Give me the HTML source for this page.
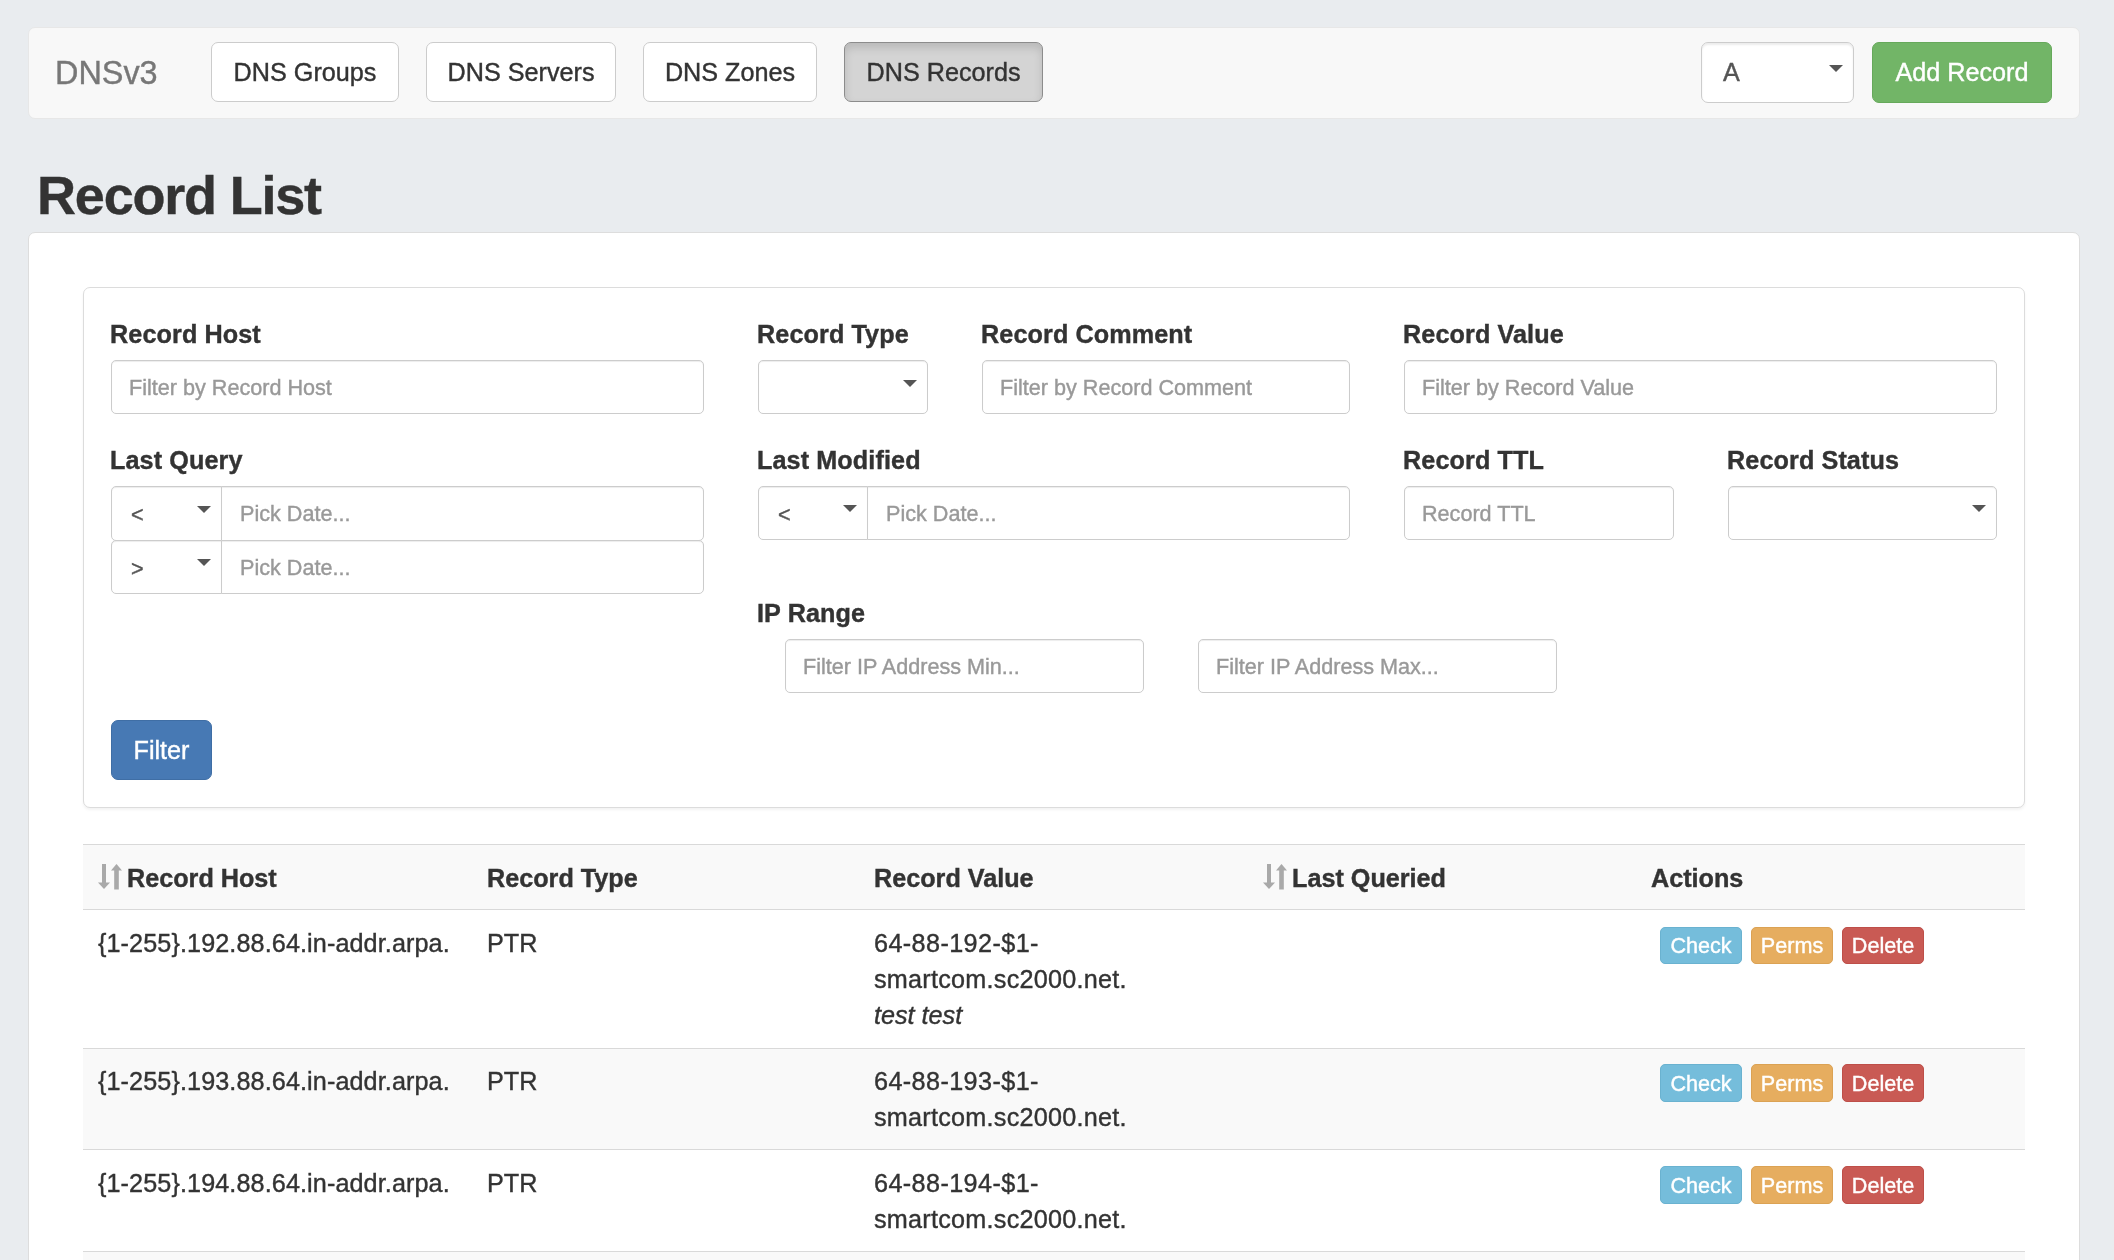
<!DOCTYPE html><html><head><meta charset="utf-8"><style>
html,body{margin:0;padding:0;}
.t{will-change:transform;-webkit-text-stroke:0.4px currentColor;}
body{width:2114px;height:1260px;overflow:hidden;position:relative;background:#e9ecef;font-family:"Liberation Sans", sans-serif;color:#333;}
</style></head><body>
<div style="position:absolute;left:28px;top:27px;width:2052px;height:92px;box-sizing:border-box;background:#f8f8f8;border:1px solid #e7e7e7;border-radius:7px;"></div>
<div class="t" style="position:absolute;left:55.00px;top:57.37px;font-size:32.4px;line-height:32.4px;white-space:nowrap;color:#777;">DNSv3</div>
<div style="position:absolute;left:211px;top:42px;width:188px;height:60px;box-sizing:border-box;background:#fff;border:1px solid #ccc;border-radius:7px;"></div>
<div class="t" style="position:absolute;left:211px;top:59.67px;width:188px;text-align:center;font-size:25.2px;line-height:25.2px;white-space:nowrap;color:#333;">DNS Groups</div>
<div style="position:absolute;left:426px;top:42px;width:190px;height:60px;box-sizing:border-box;background:#fff;border:1px solid #ccc;border-radius:7px;"></div>
<div class="t" style="position:absolute;left:426px;top:59.67px;width:190px;text-align:center;font-size:25.2px;line-height:25.2px;white-space:nowrap;color:#333;">DNS Servers</div>
<div style="position:absolute;left:643px;top:42px;width:174px;height:60px;box-sizing:border-box;background:#fff;border:1px solid #ccc;border-radius:7px;"></div>
<div class="t" style="position:absolute;left:643px;top:59.67px;width:174px;text-align:center;font-size:25.2px;line-height:25.2px;white-space:nowrap;color:#333;">DNS Zones</div>
<div style="position:absolute;left:844px;top:42px;width:199px;height:60px;box-sizing:border-box;background:#d4d4d4;border:1px solid #8c8c8c;border-radius:7px;box-shadow:inset 0 5px 9px rgba(0,0,0,.125);"></div>
<div class="t" style="position:absolute;left:844px;top:59.67px;width:199px;text-align:center;font-size:25.2px;line-height:25.2px;white-space:nowrap;color:#333;">DNS Records</div>
<div style="position:absolute;left:1701px;top:42px;width:153px;height:61px;box-sizing:border-box;background:#fff;border:1px solid #ccc;border-radius:7px;box-shadow:inset 0 2px 2px rgba(0,0,0,.075);"></div>
<div class="t" style="position:absolute;left:1723.00px;top:60.07px;font-size:25.2px;line-height:25.2px;white-space:nowrap;color:#555;">A</div>
<div style="position:absolute;left:1829px;top:64.5px;width:0;height:0;border-left:7.0px solid transparent;border-right:7.0px solid transparent;border-top:7.5px solid #555;"></div>
<div style="position:absolute;left:1872px;top:42px;width:180px;height:61px;box-sizing:border-box;background:#72b567;border:1px solid #66a95b;border-radius:7px;"></div>
<div class="t" style="position:absolute;left:1872px;top:60.07px;width:180px;text-align:center;font-size:25.2px;line-height:25.2px;white-space:nowrap;color:#fff;">Add Record</div>
<div class="t" style="position:absolute;left:37.00px;top:168.09px;font-size:54px;line-height:54px;white-space:nowrap;font-weight:bold;letter-spacing:-1.2px;">Record List</div>
<div style="position:absolute;left:28px;top:232px;width:2052px;height:1068px;box-sizing:border-box;background:#fff;border:1px solid #ddd;border-radius:7px;"></div>
<div style="position:absolute;left:83px;top:287px;width:1942px;height:521px;box-sizing:border-box;background:#fff;border:1px solid #dcdcdc;border-radius:7px;box-shadow:0 2px 3px rgba(0,0,0,.05);"></div>
<div class="t" style="position:absolute;left:110.00px;top:322.37px;font-size:25.2px;line-height:25.2px;white-space:nowrap;font-weight:bold;letter-spacing:0.1px;">Record Host</div>
<div class="t" style="position:absolute;left:757.00px;top:322.37px;font-size:25.2px;line-height:25.2px;white-space:nowrap;font-weight:bold;letter-spacing:0.1px;">Record Type</div>
<div class="t" style="position:absolute;left:981.00px;top:322.37px;font-size:25.2px;line-height:25.2px;white-space:nowrap;font-weight:bold;letter-spacing:0.1px;">Record Comment</div>
<div class="t" style="position:absolute;left:1403.00px;top:322.37px;font-size:25.2px;line-height:25.2px;white-space:nowrap;font-weight:bold;letter-spacing:0.1px;">Record Value</div>
<div class="t" style="position:absolute;left:110.00px;top:448.17px;font-size:25.2px;line-height:25.2px;white-space:nowrap;font-weight:bold;letter-spacing:0.1px;">Last Query</div>
<div class="t" style="position:absolute;left:757.00px;top:448.17px;font-size:25.2px;line-height:25.2px;white-space:nowrap;font-weight:bold;letter-spacing:0.1px;">Last Modified</div>
<div class="t" style="position:absolute;left:1403.00px;top:448.17px;font-size:25.2px;line-height:25.2px;white-space:nowrap;font-weight:bold;letter-spacing:0.1px;">Record TTL</div>
<div class="t" style="position:absolute;left:1727.00px;top:448.17px;font-size:25.2px;line-height:25.2px;white-space:nowrap;font-weight:bold;letter-spacing:0.1px;">Record Status</div>
<div class="t" style="position:absolute;left:757.00px;top:600.57px;font-size:25.2px;line-height:25.2px;white-space:nowrap;font-weight:bold;letter-spacing:0.1px;">IP Range</div>
<div style="position:absolute;left:111px;top:360px;width:593px;height:54px;box-sizing:border-box;background:#fff;border:1px solid #ccc;border-radius:5px;box-shadow:inset 0 1px 1px rgba(0,0,0,.075);"></div>
<div class="t" style="position:absolute;left:129.00px;top:376.72px;font-size:21.6px;line-height:21.6px;white-space:nowrap;color:#999;">Filter by Record Host</div>
<div style="position:absolute;left:758px;top:360px;width:170px;height:54px;box-sizing:border-box;background:#fff;border:1px solid #ccc;border-radius:5px;box-shadow:inset 0 1px 1px rgba(0,0,0,.075);"></div>
<div style="position:absolute;left:903px;top:379.6px;width:0;height:0;border-left:7.0px solid transparent;border-right:7.0px solid transparent;border-top:7.5px solid #555;"></div>
<div style="position:absolute;left:982px;top:360px;width:368px;height:54px;box-sizing:border-box;background:#fff;border:1px solid #ccc;border-radius:5px;box-shadow:inset 0 1px 1px rgba(0,0,0,.075);"></div>
<div class="t" style="position:absolute;left:1000.00px;top:376.72px;font-size:21.6px;line-height:21.6px;white-space:nowrap;color:#999;">Filter by Record Comment</div>
<div style="position:absolute;left:1404px;top:360px;width:593px;height:54px;box-sizing:border-box;background:#fff;border:1px solid #ccc;border-radius:5px;box-shadow:inset 0 1px 1px rgba(0,0,0,.075);"></div>
<div class="t" style="position:absolute;left:1422.00px;top:376.72px;font-size:21.6px;line-height:21.6px;white-space:nowrap;color:#999;">Filter by Record Value</div>
<div style="position:absolute;left:111px;top:486px;width:111px;height:55px;box-sizing:border-box;background:#fff;border:1px solid #ccc;border-radius:5px 0 0 5px;box-shadow:inset 0 1px 1px rgba(0,0,0,.075);"></div>
<div style="position:absolute;left:221px;top:486px;width:483px;height:55px;box-sizing:border-box;background:#fff;border:1px solid #ccc;border-radius:0 5px 5px 0;box-shadow:inset 0 1px 1px rgba(0,0,0,.075);"></div>
<div class="t" style="position:absolute;left:130.50px;top:504.22px;font-size:21.6px;line-height:21.6px;white-space:nowrap;color:#555;">&lt;</div>
<div style="position:absolute;left:197px;top:505.5px;width:0;height:0;border-left:7.0px solid transparent;border-right:7.0px solid transparent;border-top:7.5px solid #555;"></div>
<div class="t" style="position:absolute;left:240.00px;top:503.22px;font-size:21.6px;line-height:21.6px;white-space:nowrap;color:#999;">Pick Date...</div>
<div style="position:absolute;left:111px;top:540px;width:111px;height:54px;box-sizing:border-box;background:#fff;border:1px solid #ccc;border-radius:5px 0 0 5px;box-shadow:inset 0 1px 1px rgba(0,0,0,.075);"></div>
<div style="position:absolute;left:221px;top:540px;width:483px;height:54px;box-sizing:border-box;background:#fff;border:1px solid #ccc;border-radius:0 5px 5px 0;box-shadow:inset 0 1px 1px rgba(0,0,0,.075);"></div>
<div class="t" style="position:absolute;left:130.50px;top:557.72px;font-size:21.6px;line-height:21.6px;white-space:nowrap;color:#555;">&gt;</div>
<div style="position:absolute;left:197px;top:559.0px;width:0;height:0;border-left:7.0px solid transparent;border-right:7.0px solid transparent;border-top:7.5px solid #555;"></div>
<div class="t" style="position:absolute;left:240.00px;top:556.72px;font-size:21.6px;line-height:21.6px;white-space:nowrap;color:#999;">Pick Date...</div>
<div style="position:absolute;left:758px;top:486px;width:110px;height:54px;box-sizing:border-box;background:#fff;border:1px solid #ccc;border-radius:5px 0 0 5px;box-shadow:inset 0 1px 1px rgba(0,0,0,.075);"></div>
<div style="position:absolute;left:867px;top:486px;width:483px;height:54px;box-sizing:border-box;background:#fff;border:1px solid #ccc;border-radius:0 5px 5px 0;box-shadow:inset 0 1px 1px rgba(0,0,0,.075);"></div>
<div class="t" style="position:absolute;left:777.50px;top:503.72px;font-size:21.6px;line-height:21.6px;white-space:nowrap;color:#555;">&lt;</div>
<div style="position:absolute;left:843px;top:505.0px;width:0;height:0;border-left:7.0px solid transparent;border-right:7.0px solid transparent;border-top:7.5px solid #555;"></div>
<div class="t" style="position:absolute;left:886.00px;top:502.72px;font-size:21.6px;line-height:21.6px;white-space:nowrap;color:#999;">Pick Date...</div>
<div style="position:absolute;left:1404px;top:486px;width:270px;height:54px;box-sizing:border-box;background:#fff;border:1px solid #ccc;border-radius:5px;box-shadow:inset 0 1px 1px rgba(0,0,0,.075);"></div>
<div class="t" style="position:absolute;left:1422.00px;top:502.72px;font-size:21.6px;line-height:21.6px;white-space:nowrap;color:#999;">Record TTL</div>
<div style="position:absolute;left:1728px;top:486px;width:269px;height:54px;box-sizing:border-box;background:#fff;border:1px solid #ccc;border-radius:5px;box-shadow:inset 0 1px 1px rgba(0,0,0,.075);"></div>
<div style="position:absolute;left:1972px;top:505.4px;width:0;height:0;border-left:7.0px solid transparent;border-right:7.0px solid transparent;border-top:7.5px solid #555;"></div>
<div style="position:absolute;left:785px;top:639px;width:359px;height:54px;box-sizing:border-box;background:#fff;border:1px solid #ccc;border-radius:5px;box-shadow:inset 0 1px 1px rgba(0,0,0,.075);"></div>
<div class="t" style="position:absolute;left:803.00px;top:655.72px;font-size:21.6px;line-height:21.6px;white-space:nowrap;color:#999;">Filter IP Address Min...</div>
<div style="position:absolute;left:1198px;top:639px;width:359px;height:54px;box-sizing:border-box;background:#fff;border:1px solid #ccc;border-radius:5px;box-shadow:inset 0 1px 1px rgba(0,0,0,.075);"></div>
<div class="t" style="position:absolute;left:1216.00px;top:655.72px;font-size:21.6px;line-height:21.6px;white-space:nowrap;color:#999;">Filter IP Address Max...</div>
<div style="position:absolute;left:111px;top:720px;width:101px;height:60px;box-sizing:border-box;background:#4779b4;border:1px solid #3f6ea5;border-radius:7px;"></div>
<div class="t" style="position:absolute;left:111px;top:737.67px;width:101px;text-align:center;font-size:25.2px;line-height:25.2px;white-space:nowrap;color:#fff;">Filter</div>
<div style="position:absolute;left:83px;top:844px;width:1942px;height:66px;box-sizing:border-box;background:#f9f9f9;"></div>
<div style="position:absolute;left:83px;top:1048px;width:1942px;height:102px;box-sizing:border-box;background:#f9f9f9;"></div>
<div style="position:absolute;left:83px;top:1251px;width:1942px;height:49px;box-sizing:border-box;background:#f9f9f9;"></div>
<div style="position:absolute;left:83px;top:844px;width:1942px;height:1px;box-sizing:border-box;background:#d9d9d9;"></div>
<div style="position:absolute;left:83px;top:909px;width:1942px;height:1px;box-sizing:border-box;background:#d9d9d9;"></div>
<div style="position:absolute;left:83px;top:1048px;width:1942px;height:1px;box-sizing:border-box;background:#d9d9d9;"></div>
<div style="position:absolute;left:83px;top:1149px;width:1942px;height:1px;box-sizing:border-box;background:#d9d9d9;"></div>
<div style="position:absolute;left:83px;top:1251px;width:1942px;height:1px;box-sizing:border-box;background:#d9d9d9;"></div>
<svg style="position:absolute;left:98px;top:863px" width="26" height="27" viewBox="0 0 26 27">
<rect x="4" y="1" width="4" height="20" fill="#a9a9a9"/><polygon points="0,19.5 12,19.5 6,26" fill="#a9a9a9"/>
<rect x="16.2" y="7" width="4.6" height="19.5" fill="#a9a9a9"/><polygon points="13,7.5 24,7.5 18.5,1" fill="#a9a9a9"/>
</svg>
<svg style="position:absolute;left:1263px;top:863px" width="26" height="27" viewBox="0 0 26 27">
<rect x="4" y="1" width="4" height="20" fill="#a9a9a9"/><polygon points="0,19.5 12,19.5 6,26" fill="#a9a9a9"/>
<rect x="16.2" y="7" width="4.6" height="19.5" fill="#a9a9a9"/><polygon points="13,7.5 24,7.5 18.5,1" fill="#a9a9a9"/>
</svg>
<div class="t" style="position:absolute;left:127.00px;top:865.97px;font-size:25.2px;line-height:25.2px;white-space:nowrap;font-weight:bold;">Record Host</div>
<div class="t" style="position:absolute;left:487.00px;top:865.97px;font-size:25.2px;line-height:25.2px;white-space:nowrap;font-weight:bold;">Record Type</div>
<div class="t" style="position:absolute;left:874.00px;top:865.97px;font-size:25.2px;line-height:25.2px;white-space:nowrap;font-weight:bold;">Record Value</div>
<div class="t" style="position:absolute;left:1292.00px;top:865.97px;font-size:25.2px;line-height:25.2px;white-space:nowrap;font-weight:bold;">Last Queried</div>
<div class="t" style="position:absolute;left:1651.00px;top:865.97px;font-size:25.2px;line-height:25.2px;white-space:nowrap;font-weight:bold;">Actions</div>
<div class="t" style="position:absolute;left:97.80px;top:930.67px;font-size:25.2px;line-height:25.2px;white-space:nowrap;letter-spacing:0.1px;">{1-255}.192.88.64.in-addr.arpa.</div>
<div class="t" style="position:absolute;left:487.00px;top:930.67px;font-size:25.2px;line-height:25.2px;white-space:nowrap;">PTR</div>
<div class="t" style="position:absolute;left:874.00px;top:930.67px;font-size:25.2px;line-height:25.2px;white-space:nowrap;letter-spacing:0.4px;">64-88-192-$1-</div>
<div class="t" style="position:absolute;left:874.00px;top:966.67px;font-size:25.2px;line-height:25.2px;white-space:nowrap;letter-spacing:0.25px;">smartcom.sc2000.net.</div>
<div class="t" style="position:absolute;left:874.00px;top:1002.67px;font-size:25.2px;line-height:25.2px;white-space:nowrap;font-style:italic;">test test</div>
<div style="position:absolute;left:1660px;top:927px;width:82px;height:37px;box-sizing:border-box;background:#75bddb;border:1px solid #6ab2d0;border-radius:5px;"></div>
<div class="t" style="position:absolute;left:1660px;top:935.22px;width:82px;text-align:center;font-size:21.6px;line-height:21.6px;white-space:nowrap;color:#fff;">Check</div>
<div style="position:absolute;left:1751px;top:927px;width:82px;height:37px;box-sizing:border-box;background:#e6ad5f;border:1px solid #dba254;border-radius:5px;"></div>
<div class="t" style="position:absolute;left:1751px;top:935.22px;width:82px;text-align:center;font-size:21.6px;line-height:21.6px;white-space:nowrap;color:#fff;">Perms</div>
<div style="position:absolute;left:1842px;top:927px;width:82px;height:37px;box-sizing:border-box;background:#c95a54;border:1px solid #be4f49;border-radius:5px;"></div>
<div class="t" style="position:absolute;left:1842px;top:935.22px;width:82px;text-align:center;font-size:21.6px;line-height:21.6px;white-space:nowrap;color:#fff;">Delete</div>
<div class="t" style="position:absolute;left:97.80px;top:1068.67px;font-size:25.2px;line-height:25.2px;white-space:nowrap;letter-spacing:0.1px;">{1-255}.193.88.64.in-addr.arpa.</div>
<div class="t" style="position:absolute;left:487.00px;top:1068.67px;font-size:25.2px;line-height:25.2px;white-space:nowrap;">PTR</div>
<div class="t" style="position:absolute;left:874.00px;top:1068.67px;font-size:25.2px;line-height:25.2px;white-space:nowrap;letter-spacing:0.4px;">64-88-193-$1-</div>
<div class="t" style="position:absolute;left:874.00px;top:1104.67px;font-size:25.2px;line-height:25.2px;white-space:nowrap;letter-spacing:0.25px;">smartcom.sc2000.net.</div>
<div style="position:absolute;left:1660px;top:1064px;width:82px;height:38px;box-sizing:border-box;background:#75bddb;border:1px solid #6ab2d0;border-radius:5px;"></div>
<div class="t" style="position:absolute;left:1660px;top:1072.82px;width:82px;text-align:center;font-size:21.6px;line-height:21.6px;white-space:nowrap;color:#fff;">Check</div>
<div style="position:absolute;left:1751px;top:1064px;width:82px;height:38px;box-sizing:border-box;background:#e6ad5f;border:1px solid #dba254;border-radius:5px;"></div>
<div class="t" style="position:absolute;left:1751px;top:1072.82px;width:82px;text-align:center;font-size:21.6px;line-height:21.6px;white-space:nowrap;color:#fff;">Perms</div>
<div style="position:absolute;left:1842px;top:1064px;width:82px;height:38px;box-sizing:border-box;background:#c95a54;border:1px solid #be4f49;border-radius:5px;"></div>
<div class="t" style="position:absolute;left:1842px;top:1072.82px;width:82px;text-align:center;font-size:21.6px;line-height:21.6px;white-space:nowrap;color:#fff;">Delete</div>
<div class="t" style="position:absolute;left:97.80px;top:1170.67px;font-size:25.2px;line-height:25.2px;white-space:nowrap;letter-spacing:0.1px;">{1-255}.194.88.64.in-addr.arpa.</div>
<div class="t" style="position:absolute;left:487.00px;top:1170.67px;font-size:25.2px;line-height:25.2px;white-space:nowrap;">PTR</div>
<div class="t" style="position:absolute;left:874.00px;top:1170.67px;font-size:25.2px;line-height:25.2px;white-space:nowrap;letter-spacing:0.4px;">64-88-194-$1-</div>
<div class="t" style="position:absolute;left:874.00px;top:1206.67px;font-size:25.2px;line-height:25.2px;white-space:nowrap;letter-spacing:0.25px;">smartcom.sc2000.net.</div>
<div style="position:absolute;left:1660px;top:1166px;width:82px;height:38px;box-sizing:border-box;background:#75bddb;border:1px solid #6ab2d0;border-radius:5px;"></div>
<div class="t" style="position:absolute;left:1660px;top:1174.82px;width:82px;text-align:center;font-size:21.6px;line-height:21.6px;white-space:nowrap;color:#fff;">Check</div>
<div style="position:absolute;left:1751px;top:1166px;width:82px;height:38px;box-sizing:border-box;background:#e6ad5f;border:1px solid #dba254;border-radius:5px;"></div>
<div class="t" style="position:absolute;left:1751px;top:1174.82px;width:82px;text-align:center;font-size:21.6px;line-height:21.6px;white-space:nowrap;color:#fff;">Perms</div>
<div style="position:absolute;left:1842px;top:1166px;width:82px;height:38px;box-sizing:border-box;background:#c95a54;border:1px solid #be4f49;border-radius:5px;"></div>
<div class="t" style="position:absolute;left:1842px;top:1174.82px;width:82px;text-align:center;font-size:21.6px;line-height:21.6px;white-space:nowrap;color:#fff;">Delete</div>
</body></html>
